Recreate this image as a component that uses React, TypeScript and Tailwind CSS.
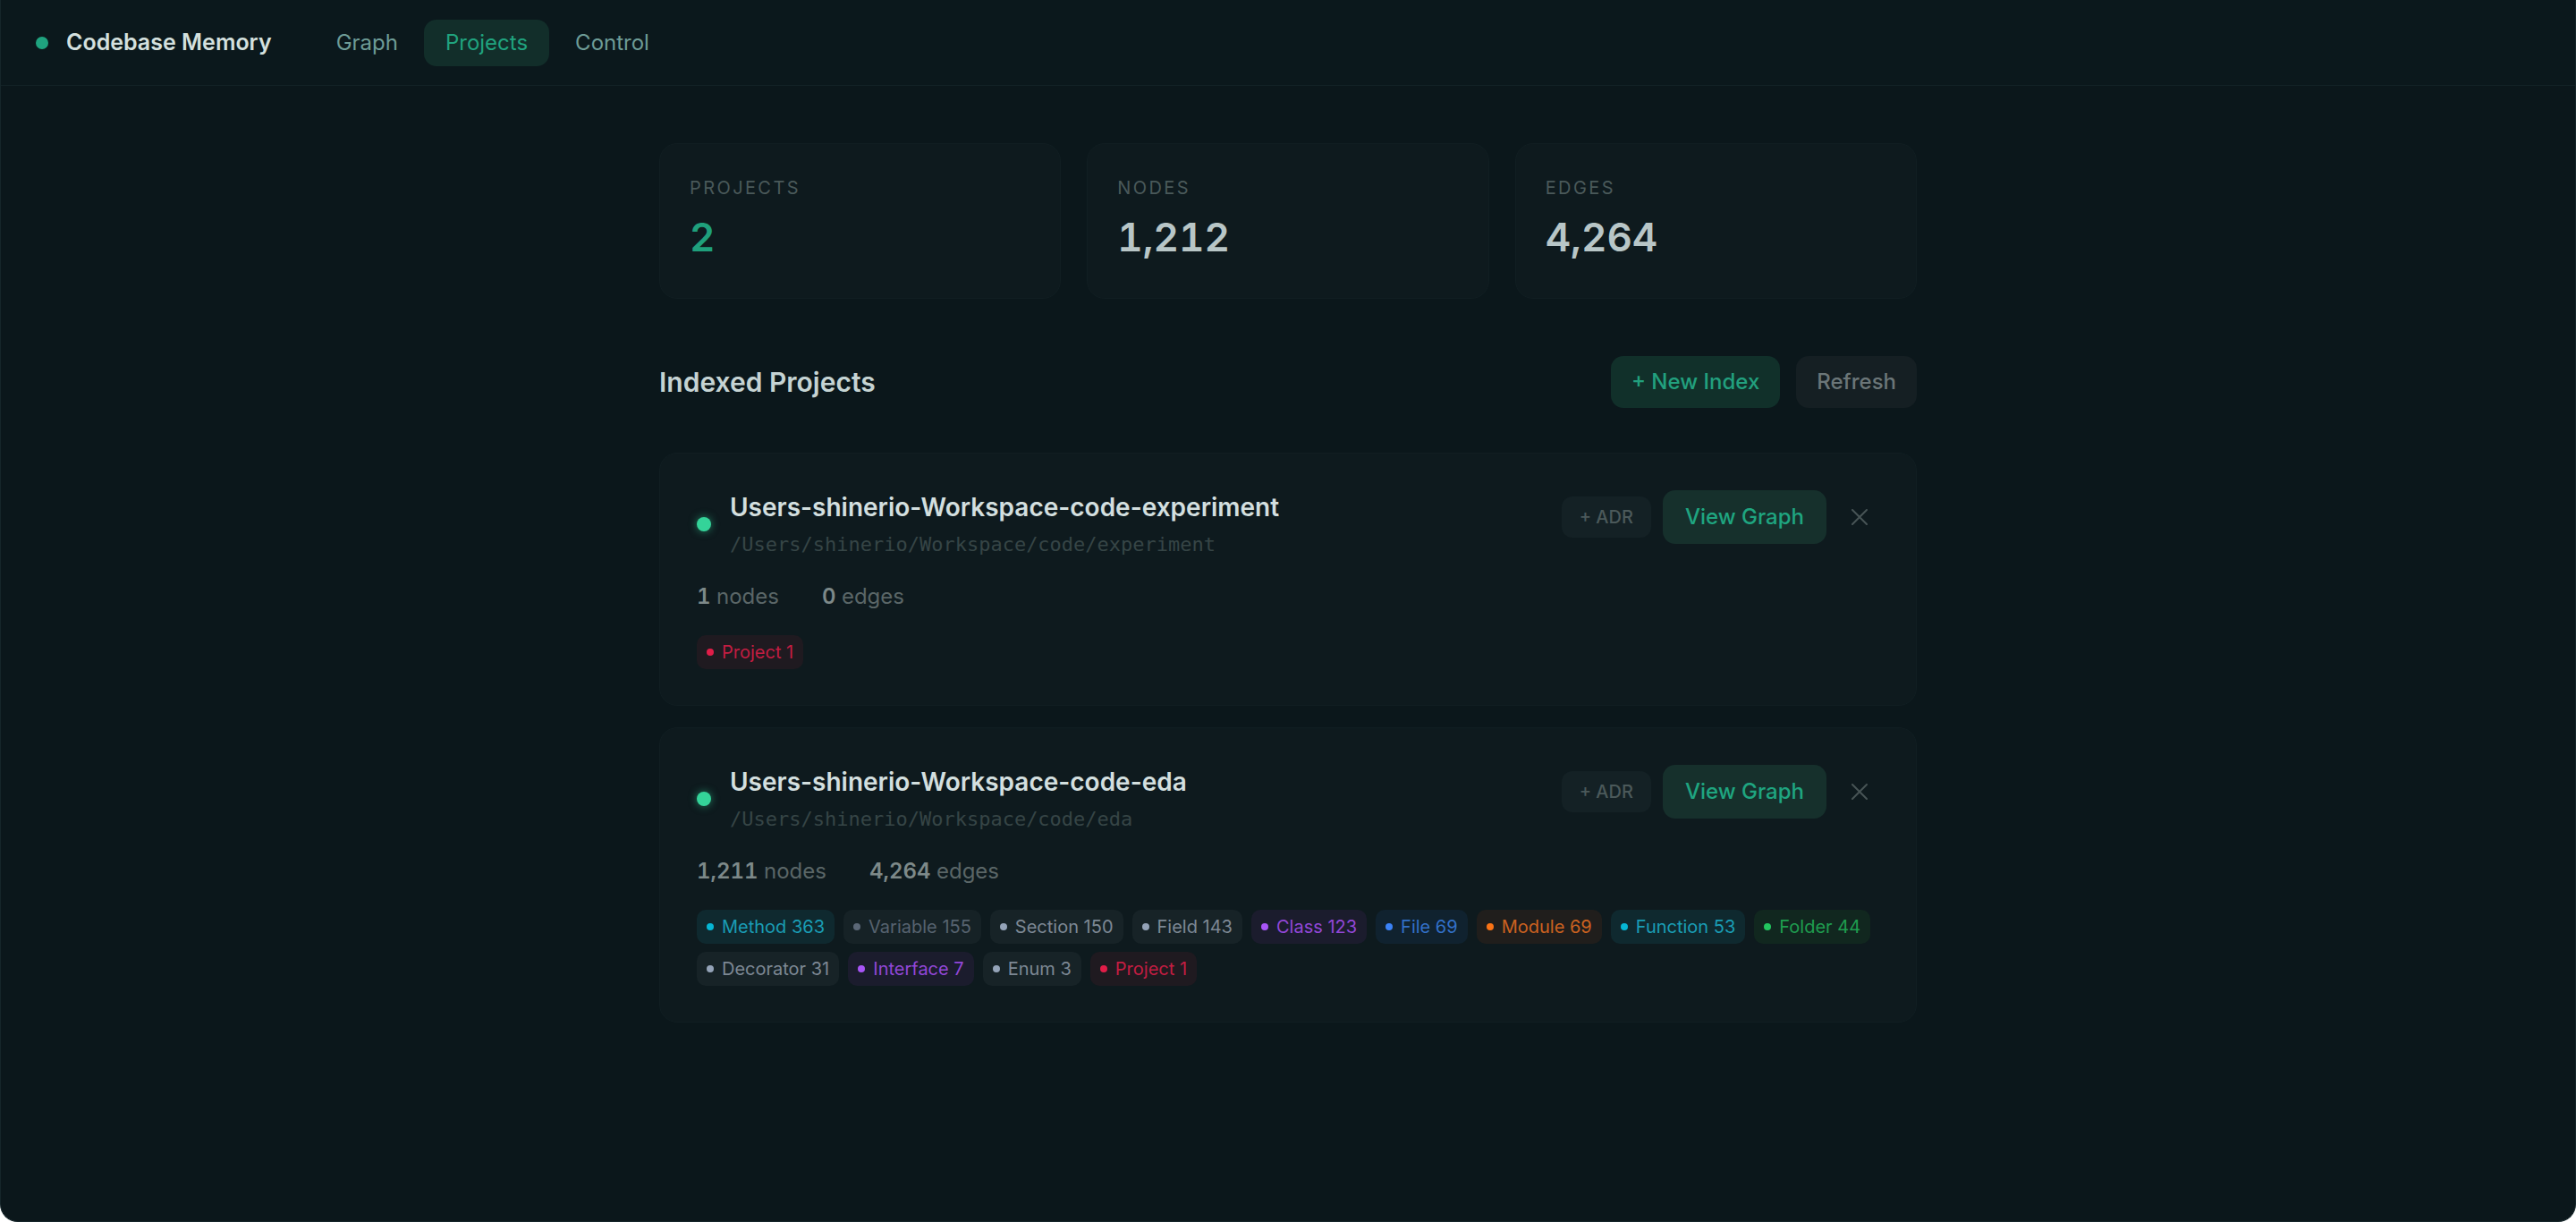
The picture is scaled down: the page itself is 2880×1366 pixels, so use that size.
import clsx from "clsx";

type Tone = "cyan" | "slate" | "gray" | "purple" | "blue" | "orange" | "green" | "rose";

const toneStyles: Record<Tone, { box: string; dot: string }> = {
  cyan: { box: "bg-[#0f292f] text-[#1a9db5]", dot: "bg-[#06b6d4]" },
  slate: { box: "bg-[#162226] text-[#56636f]", dot: "bg-[#5b6776]" },
  gray: { box: "bg-[#172327] text-[#7d8894]", dot: "bg-[#94a3b8]" },
  purple: { box: "bg-[#1b1c2d] text-[#9247d8]", dot: "bg-[#a855f7]" },
  blue: { box: "bg-[#10222f] text-[#3270c8]", dot: "bg-[#3b82f6]" },
  orange: { box: "bg-[#201e1c] text-[#cc6220]", dot: "bg-[#f97316]" },
  green: { box: "bg-[#11271f] text-[#1f9d4f]", dot: "bg-[#22c55e]" },
  rose: { box: "bg-[#1f1a20] text-[#c31d42]", dot: "bg-[#e11d48]" },
};

type Tag = { label: string; count: number; tone: Tone };

type Project = {
  name: string;
  path: string;
  nodes: string;
  edges: string;
  tags: Tag[];
};

const projects: Project[] = [
  {
    name: "Users-shinerio-Workspace-code-experiment",
    path: "/Users/shinerio/Workspace/code/experiment",
    nodes: "1",
    edges: "0",
    tags: [{ label: "Project", count: 1, tone: "rose" }],
  },
  {
    name: "Users-shinerio-Workspace-code-eda",
    path: "/Users/shinerio/Workspace/code/eda",
    nodes: "1,211",
    edges: "4,264",
    tags: [
      { label: "Method", count: 363, tone: "cyan" },
      { label: "Variable", count: 155, tone: "slate" },
      { label: "Section", count: 150, tone: "gray" },
      { label: "Field", count: 143, tone: "gray" },
      { label: "Class", count: 123, tone: "purple" },
      { label: "File", count: 69, tone: "blue" },
      { label: "Module", count: 69, tone: "orange" },
      { label: "Function", count: 53, tone: "cyan" },
      { label: "Folder", count: 44, tone: "green" },
      { label: "Decorator", count: 31, tone: "gray" },
      { label: "Interface", count: 7, tone: "purple" },
      { label: "Enum", count: 3, tone: "gray" },
      { label: "Project", count: 1, tone: "rose" },
    ],
  },
];

function StatCard({ label, value, accent }: { label: string; value: string; accent?: boolean }) {
  return (
    <div className="rounded-[20px] border border-[#111e22] bg-[#0e1a1e] px-[33px] pt-[34px] pb-[40px]">
      <div className="text-[20px] leading-[30px] tracking-[0.12em] text-[#4a595a] uppercase">{label}</div>
      <div
        className={clsx(
          "mt-[13px] text-[44px] leading-[55px] font-semibold tabular-nums",
          accent ? "text-[#1fa07c]" : "text-[#b8c6c7]",
        )}
      >
        {value}
      </div>
    </div>
  );
}

function TagChip({ tag }: { tag: Tag }) {
  const tone = toneStyles[tag.tone];
  return (
    <span
      className={clsx(
        "flex h-[38px] items-center gap-[9px] rounded-[10px] px-[11px] text-[20px] leading-[28px]",
        tone.box,
      )}
    >
      <span className={clsx("h-[8px] w-[8px] rounded-full", tone.dot)} />
      {tag.label} {tag.count}
    </span>
  );
}

function ProjectCard({ project }: { project: Project }) {
  return (
    <div className="rounded-[20px] border border-[#111e22] bg-[#0e1a1e] px-[41px] pt-[41px] pb-[40px]">
      <div className="flex items-start justify-between">
        <div className="flex items-center gap-[21px]">
          <span className="h-[16px] w-[16px] rounded-full bg-[#34d399] shadow-[0_0_10px_rgba(52,211,153,0.55)]" />
          <div>
            <div className="text-[28px] leading-[39px] font-semibold text-[#d3dfdf]">{project.name}</div>
            <div className="mt-[7px] font-['DejaVu_Sans_Mono',monospace] text-[22px] leading-[30px] text-[#364546]">
              {project.path}
            </div>
          </div>
        </div>
        <div className="flex items-center">
          <button className="h-[46px] rounded-[12px] bg-[#142125] px-[20px] text-[20px] font-medium text-[#4b595a]">
            + ADR
          </button>
          <button className="ml-[13px] h-[60px] rounded-[14px] bg-[#16302c] px-[25px] text-[24px] font-medium text-[#1fa580]">
            View Graph
          </button>
          <button className="ml-[15px] flex h-[44px] w-[44px] items-center justify-center">
            <svg width="18" height="18" viewBox="0 0 18 18" fill="none">
              <path d="M1 1 17 17M17 1 1 17" stroke="#475455" strokeWidth="2" strokeLinecap="round" />
            </svg>
          </button>
        </div>
      </div>

      <div className="mt-[25px] flex gap-[48px] text-[24px] leading-[36px] tabular-nums">
        <span className="text-[#5a6667]">
          <span className="font-semibold text-[#7d8989]">{project.nodes}</span> nodes
        </span>
        <span className="text-[#5a6667]">
          <span className="font-semibold text-[#7d8989]">{project.edges}</span> edges
        </span>
      </div>

      <div className="mt-[25px] flex flex-wrap gap-[9px] gap-x-[10px]">
        {project.tags.map((tag) => (
          <TagChip key={tag.label} tag={tag} />
        ))}
      </div>
    </div>
  );
}

export default function App() {
  return (
    <div className="flex h-[1366px] w-full flex-col overflow-hidden rounded-b-[20px] border-x border-b border-[#16262a] bg-[#0b171b] font-['Inter',sans-serif]">
      <header className="flex h-[96px] shrink-0 items-center border-b border-[#132226] bg-[#0b181c] pl-[39px]">
        <span className="h-[14px] w-[14px] rounded-full bg-[#1fa37f]" />
        <span className="ml-[20px] text-[25px] font-semibold text-[#d4e0de]">Codebase Memory</span>
        <nav className="ml-[48px] flex items-center gap-[5px]">
          <a className="rounded-[14px] px-[24px] py-[10px] text-[24px] leading-[32px] text-[#6e9c97]">Graph</a>
          <a className="rounded-[14px] bg-[#122e2a] px-[24px] py-[10px] text-[24px] leading-[32px] text-[#20a37f]">
            Projects
          </a>
          <a className="rounded-[14px] px-[24px] py-[10px] text-[24px] leading-[32px] text-[#6e9c97]">Control</a>
        </nav>
      </header>

      <main className="mx-auto w-full max-w-[1406px] pt-[64px]">
        <div className="grid grid-cols-3 gap-[29px]">
          <StatCard label="Projects" value="2" accent />
          <StatCard label="Nodes" value="1,212" />
          <StatCard label="Edges" value="4,264" />
        </div>

        <div className="mt-[64px] flex items-center justify-between">
          <h2 className="text-[30px] font-semibold text-[#c5d3d3]">Indexed Projects</h2>
          <div className="flex gap-[18px]">
            <button className="h-[58px] rounded-[14px] bg-[#11302a] px-[23px] text-[24px] font-medium text-[#22a07e]">
              + New Index
            </button>
            <button className="h-[58px] rounded-[14px] bg-[#151f23] px-[23px] text-[24px] font-medium text-[#6b7678]">
              Refresh
            </button>
          </div>
        </div>

        <div className="mt-[50px] flex flex-col gap-[24px]">
          {projects.map((project) => (
            <ProjectCard key={project.name} project={project} />
          ))}
        </div>
      </main>
    </div>
  );
}
